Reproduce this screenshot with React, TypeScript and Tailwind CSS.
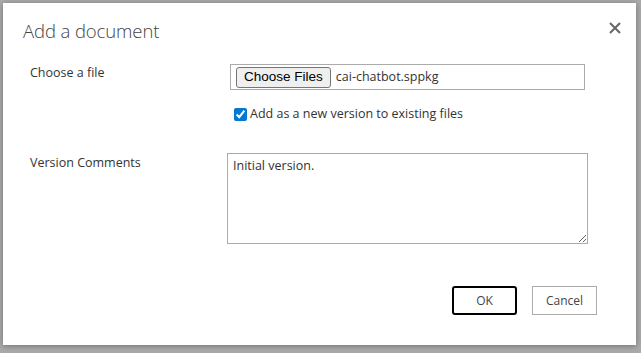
import React from "react";

const FONT = { fontFamily: '"Open Sans", "Noto Sans", sans-serif' };

const CloseIcon: React.FC = () => (
    <svg width="12" height="12" viewBox="0 0 12 12" className="text-[#666]">
        <path d="M1 1 L11 11 M11 1 L1 11" stroke="currentColor" strokeWidth="2" />
    </svg>
);

export default function App() {
    return (
        <div className="w-[641px] h-[353px] bg-[#ababab] pt-[3px] pl-[3px] overflow-hidden" style={FONT}>
            <div className="w-[633px] h-[342px] bg-white shadow-[0_1px_6px_rgba(0,0,0,0.35)] flex flex-col">
                <div className="flex items-start justify-between pl-[20px] pr-[14px] pt-[15px]">
                    <h1 className="text-[18.5px] font-light text-[#444] leading-[26px] tracking-[-0.1px]">Add a document</h1>
                    <button className="mt-[3px] p-[1px]" aria-label="Close">
                        <CloseIcon />
                    </button>
                </div>

                <div className="mt-[20px] pl-[27px] flex flex-col">
                    <div className="flex items-start">
                        <label className="w-[200px] text-[12.5px] text-[#333] leading-[16px] pt-[1px]">Choose a file</label>
                        <div className="w-[355px] h-[26px] border border-[#ababab] flex items-center pl-[5px] gap-[5px]">
                            <span
                                className="h-[21px] px-[7px] flex items-center bg-[#efefef] border border-[#767676] rounded-[3px] text-[13.5px] text-black"
                                style={{ fontFamily: '"Liberation Sans", Arial, sans-serif' }}
                            >
                                Choose Files
                            </span>
                            <span className="text-[12.5px] text-[#333]">cai-chatbot.sppkg</span>
                        </div>
                    </div>

                    <label className="ml-[204px] mt-[17px] flex items-center gap-[3px] text-[12.5px] text-[#333] leading-[14px]">
                        <input type="checkbox" defaultChecked className="w-[13px] h-[13px] m-0 accent-[#0078d4]" />
                        Add as a new version to existing files
                    </label>

                    <div className="flex items-start mt-[32px]">
                        <label className="w-[197px] text-[12.5px] text-[#333] leading-[16px] pt-[2px]">Version Comments</label>
                        <textarea
                            defaultValue="Initial version."
                            className="w-[361px] h-[91px] border border-[#ababab] px-[5px] py-[3px] text-[12.5px] text-[#333] outline-none"
                        />
                    </div>
                </div>

                <div className="mt-[42px] flex justify-end gap-[15px] pr-[39px]">
                    <button className="w-[65px] h-[29px] border-2 border-black rounded-[3px] text-[12px] text-[#444]">OK</button>
                    <button className="w-[65px] h-[29px] border border-[#ababab] text-[12px] text-[#444]">Cancel</button>
                </div>
            </div>
        </div>
    );
}
